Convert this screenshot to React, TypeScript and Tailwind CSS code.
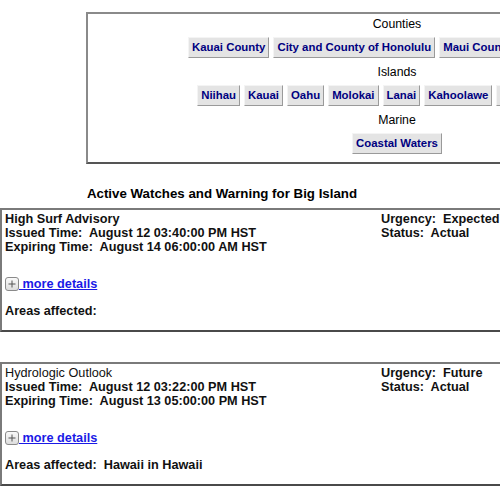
import React from 'react';

const counties = ['Kauai County', 'City and County of Honolulu', 'Maui County', 'Hawaii County'];
const islands = ['Niihau', 'Kauai', 'Oahu', 'Molokai', 'Lanai', 'Kahoolawe', 'Maui', 'Big Island'];
const marine = ['Coastal Waters'];

interface Alert {
    event: string;
    eventBold: boolean;
    issued: string;
    expiring: string;
    urgency: string;
    status: string;
    areas: string;
}

const alerts: Alert[] = [
    {
        event: 'High Surf Advisory',
        eventBold: true,
        issued: 'August 12 03:40:00 PM HST',
        expiring: 'August 14 06:00:00 AM HST',
        urgency: 'Expected',
        status: 'Actual',
        areas: '',
    },
    {
        event: 'Hydrologic Outlook',
        eventBold: false,
        issued: 'August 12 03:22:00 PM HST',
        expiring: 'August 13 05:00:00 PM HST',
        urgency: 'Future',
        status: 'Actual',
        areas: 'Hawaii in Hawaii',
    },
];

const ZoneButton = ({ label }: { label: string }) => (
    <button className="h-[21px] shrink-0 whitespace-nowrap px-[3px] bg-[#e4e4e4] border border-t-[#f4f4f4] border-l-[#f4f4f4] border-b-[#9a9a9a] border-r-[#9a9a9a] text-[11.4px] leading-[13px] font-bold text-[#000080]">
        {label}
    </button>
);

const ZoneGroup = ({ title, items, last }: { title: string; items: string[]; last?: boolean }) => (
    <div className={last ? '' : 'mb-[7px]'}>
        <div className="text-[12.3px] leading-[14px] text-black text-center">{title}</div>
        <div className="mt-[6px] flex justify-center gap-[4px]">
            {items.map((item) => (
                <ZoneButton key={item} label={item} />
            ))}
        </div>
    </div>
);

const PlusIcon = () => (
    <svg width="14" height="14" viewBox="0 0 14 14" className="shrink-0">
        <defs>
            <linearGradient id="plusbg" x1="0" y1="0" x2="0" y2="1">
                <stop offset="0" stopColor="#fbfbfb" />
                <stop offset="1" stopColor="#dcdcdc" />
            </linearGradient>
        </defs>
        <rect x="0.5" y="0.5" width="13" height="13" rx="2.5" fill="url(#plusbg)" stroke="#8a8a8a" />
        <path d="M7 3.5v7M3.5 7h7" stroke="#555" strokeWidth="1" />
    </svg>
);

const AlertBox = ({ alert }: { alert: Alert }) => (
    <div className="w-[530px] border-2 border-[#7a7a7a] border-b-[#4a4a4a] px-[3px] pt-[2px] pb-[12px] text-[12.7px] leading-[14px] text-[#111] font-bold">
        <div className="flex">
            <div className="w-[376px] shrink-0">
                <div className={alert.eventBold ? 'font-bold' : 'font-normal'}>{alert.event}</div>
                <div>Issued Time:&nbsp; {alert.issued}</div>
                <div>Expiring Time:&nbsp; {alert.expiring}</div>
            </div>
            <div>
                <div>Urgency:&nbsp; {alert.urgency}</div>
                <div>Status:&nbsp; {alert.status}</div>
            </div>
        </div>
        <div className="mt-[22px] flex items-center h-[16px]">
            <PlusIcon />
            <a href="#" className="text-[#1a1ae6] underline whitespace-pre">
                {' more details'}
            </a>
        </div>
        <div className="mt-[12px]">
            Areas affected:&nbsp; {alert.areas}
        </div>
    </div>
);

export default function App() {
    return (
        <div className="w-[500px] h-[500px] overflow-hidden bg-white font-['Liberation_Sans',Arial,sans-serif]">
            <div className="ml-[86px] mt-[12px] w-[622px] h-[152px] border-2 border-[#555] border-t-[#8a8a8a] border-l-[#8a8a8a] pt-[3px]">
                <ZoneGroup title="Counties" items={counties} />
                <ZoneGroup title="Islands" items={islands} />
                <ZoneGroup title="Marine" items={marine} last />
            </div>

            <div className="w-[444px] mt-[22px] text-center text-[13.3px] leading-[16px] font-bold text-black">
                Active Watches and Warning for Big Island
            </div>

            <div className="mt-[6px] flex flex-col gap-[30px]">
                {alerts.map((alert) => (
                    <AlertBox key={alert.event} alert={alert} />
                ))}
            </div>
        </div>
    );
}
